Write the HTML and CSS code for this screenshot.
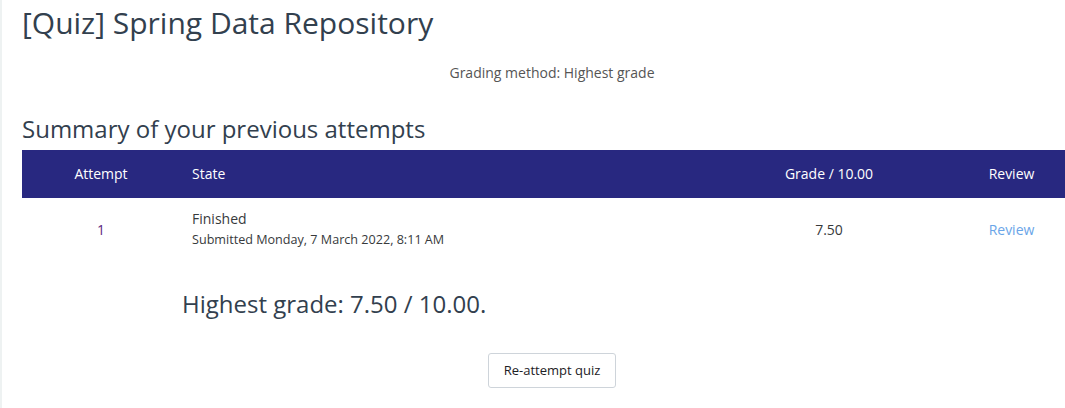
FILE: index.html
```html
<!DOCTYPE html>
<html lang="en">
<head>
<meta charset="utf-8">
<title>[Quiz] Spring Data Repository</title>
<link rel="stylesheet" href="styles.css">
</head>
<body>
<div class="page">
  <h2 class="title">[Quiz] Spring Data Repository</h2>
  <p class="grading">Grading method: Highest grade</p>
  <h3 class="summary">Summary of your previous attempts</h3>
  <table class="attempts">
    <thead>
      <tr>
        <th class="c-attempt">Attempt</th>
        <th class="c-state">State</th>
        <th class="c-grade">Grade / 10.00</th>
        <th class="c-review">Review</th>
      </tr>
    </thead>
    <tbody>
      <tr>
        <td class="c-attempt num">1</td>
        <td class="c-state">
          <div class="state">Finished</div>
          <div class="submitted">Submitted Monday, 7 March 2022, 8:11 AM</div>
        </td>
        <td class="c-grade">7.50</td>
        <td class="c-review"><a class="review-link" href="#">Review</a></td>
      </tr>
    </tbody>
  </table>
  <div class="final">
    <h3 class="highest">Highest grade: 7.50 / 10.00.</h3>
  </div>
  <div class="actions">
    <button class="btn" type="button">Re-attempt quiz</button>
  </div>
</div>
</body>
</html>
```
FILE: styles.css
```css
html {
  overflow: hidden;
  min-height: 100%;
  background: #fff;
  border-left: 2px solid #eef2f2;
}
body {
  margin: 0;
  font-family: "Open Sans", "Liberation Sans", sans-serif;
  color: #373a3c;
}
.page {
  width: 1060px;
  margin-left: 20px;
}
.title {
  margin: 0;
  padding-top: 3px;
  font-size: 30px;
  font-weight: 400;
  line-height: 40px;
  color: #32404e;
}
.grading {
  margin: 20px 0 0;
  text-align: center;
  font-size: 14px;
  line-height: 20px;
  color: #555;
}
.summary {
  margin: 31px 0 0;
  font-size: 24px;
  font-weight: 400;
  line-height: 30px;
  color: #32404e;
}
.attempts {
  margin-top: 6px;
  width: 1060px;
  border-collapse: collapse;
  table-layout: fixed;
  font-size: 14px;
}
.attempts th,
.attempts td {
  box-sizing: border-box;
}
.attempts th {
  background: #282880;
  color: #fff;
  font-weight: 400;
  padding: 14px 12px;
  line-height: 20px;
}
.attempts td {
  padding: 11px 12px 12px;
  line-height: 20px;
  vertical-align: middle;
  color: #373a3c;
}
.c-attempt { width: 158px; text-align: center; }
.c-state { width: 537px; text-align: left; }
.c-grade { width: 224px; text-align: center; }
.c-review { width: 141px; text-align: center; }
.attempts td.num { color: #5c2a80; }
.state { font-size: 14px; line-height: 20px; }
.submitted { font-size: 12.6px; line-height: 22px; }
.review-link {
  color: #6aa5e8;
  text-decoration: none;
}
.final {
  width: 740px;
  margin: 26px auto 0;
}
.highest {
  margin: 0;
  font-size: 24px;
  font-weight: 400;
  line-height: 30px;
  color: #32404e;
}
.actions {
  display: flex;
  justify-content: center;
  margin-top: 34px;
}
.btn {
  font-family: inherit;
  font-size: 13px;
  line-height: 19px;
  color: #1d2125;
  background: #fff;
  border: 1px solid #ced4da;
  border-radius: 3px;
  padding: 7px 15px;
}
```
